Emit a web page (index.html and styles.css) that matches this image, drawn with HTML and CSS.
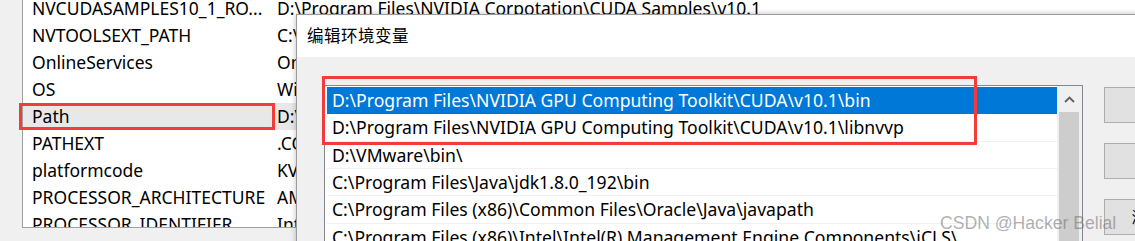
FILE: index.html
```html
<!DOCTYPE html>
<html lang="zh-CN">
<head>
<meta charset="utf-8">
<title>编辑环境变量</title>
<link rel="stylesheet" href="styles.css">
</head>
<body>
<div class="env-window">
  <div class="var-list">
    <div class="var-row"><span class="var-name">NVCUDASAMPLES10_1_RO...</span><span class="var-value">D:\Program Files\NVIDIA Corpotation\CUDA Samples\v10.1</span></div>
    <div class="var-row"><span class="var-name">NVTOOLSEXT_PATH</span><span class="var-value">C:\Program Files\NVIDIA Corporation\NvToolsExt\</span></div>
    <div class="var-row"><span class="var-name">OnlineServices</span><span class="var-value">Online Services</span></div>
    <div class="var-row"><span class="var-name">OS</span><span class="var-value">Windows_NT</span></div>
    <div class="var-row is-selected"><span class="var-name">Path</span><span class="var-value">D:\Program Files\NVIDIA GPU Computing Toolkit</span></div>
    <div class="var-row"><span class="var-name">PATHEXT</span><span class="var-value">.COM;.EXE;.BAT;.CMD;.VBS</span></div>
    <div class="var-row"><span class="var-name">platformcode</span><span class="var-value">KV</span></div>
    <div class="var-row"><span class="var-name">PROCESSOR_ARCHITECTURE</span><span class="var-value">AMD64</span></div>
    <div class="var-row"><span class="var-name">PROCESSOR_IDENTIFIER</span><span class="var-value">Intel64 Family 6</span></div>
  </div>
</div>

<div class="dialog">
  <div class="dialog-title">编辑环境变量</div>
  <div class="dialog-body">
    <div class="path-list">
      <div class="path-rows">
        <div class="path-row is-active">D:\Program Files\NVIDIA GPU Computing Toolkit\CUDA\v10.1\bin</div>
        <div class="path-row">D:\Program Files\NVIDIA GPU Computing Toolkit\CUDA\v10.1\libnvvp</div>
        <div class="path-row">D:\VMware\bin\</div>
        <div class="path-row">C:\Program Files\Java\jdk1.8.0_192\bin</div>
        <div class="path-row">C:\Program Files (x86)\Common Files\Oracle\Java\javapath</div>
        <div class="path-row">C:\Program Files (x86)\Intel\Intel(R) Management Engine Components\iCLS\</div>
      </div>
      <div class="scrollbar">
        <div class="scroll-up">
          <svg width="11" height="7" viewBox="0 0 11 7"><polyline points="1,6 5.5,1.5 10,6" fill="none" stroke="#606060" stroke-width="1.8"/></svg>
        </div>
        <div class="scroll-thumb"></div>
      </div>
    </div>
    <div class="buttons">
      <div class="btn">新建(N)</div>
      <div class="btn">编辑(E)</div>
      <div class="btn">浏览(B)...</div>
    </div>
  </div>
</div>

<div class="mark mark-path"></div>
<div class="mark mark-cuda"></div>
<div class="watermark">CSDN @Hacker Belial</div>
</body>
</html>
```

FILE: styles.css
```css
html, body {
  margin: 0;
  padding: 0;
}
body {
  width: 1135px;
  height: 241px;
  overflow: hidden;
  position: relative;
  background: #f0f0f0;
  font-family: "Noto Sans", "Noto Sans CJK SC", sans-serif;
  color: #000;
}

.env-window {
  padding-left: 22px;
}
.var-list {
  margin-top: -5px;
  height: 232px;
  overflow: hidden;
  background: #fff;
  border-left: 1px solid #a0a0a0;
  border-bottom: 1px solid #a0a0a0;
}
.var-row {
  display: flex;
  height: 27px;
  line-height: 27px;
  font-size: 17.5px;
  white-space: nowrap;
}
.var-row.is-selected {
  background: #e8e8e8;
}
.var-name {
  flex: 0 0 254px;
  box-sizing: border-box;
  padding-left: 9px;
  overflow: hidden;
}
.var-value {
  flex: 1;
}

.dialog {
  position: absolute;
  left: 296px;
  top: 14px;
  width: 900px;
  height: 260px;
  border: 1px solid #9a9a9a;
  box-shadow: 0 0 6px rgba(0, 0, 0, 0.25);
  background: #f0f0f0;
}
.dialog-title {
  height: 42px;
  line-height: 42px;
  padding-left: 10px;
  background: #fff;
  font-size: 16.5px;
  letter-spacing: 0.5px;
}
.dialog-body {
  display: flex;
  align-items: flex-start;
  padding: 28px 0 0 27px;
}
.path-list {
  flex: 0 0 auto;
  display: flex;
  width: 757px;
  height: 200px;
  border: 1px solid #828790;
  background: #fff;
}
.path-rows {
  flex: 1;
  min-width: 0;
  padding: 1px 0 0 2px;
}
.path-row {
  box-sizing: border-box;
  height: 27.33px;
  line-height: 26px;
  padding-left: 5px;
  font-size: 17.6px;
  white-space: nowrap;
  border-bottom: 1px solid #f0f0f0;
}
.path-row.is-active {
  background: #0078d7;
  color: #fff;
  border-bottom-color: #0078d7;
}
.scrollbar {
  flex: 0 0 25px;
  display: flex;
  flex-direction: column;
  background: #f0f0f0;
}
.scroll-up {
  height: 26px;
  display: flex;
  align-items: center;
  justify-content: center;
}
.scroll-thumb {
  flex: 1;
  margin: 0 3px 0 2px;
  background: #cdcdcd;
}

.buttons {
  flex: 0 0 auto;
  display: flex;
  flex-direction: column;
  gap: 20px;
  margin: 2px 0 0 21px;
}
.btn {
  width: 118px;
  height: 34px;
  line-height: 34px;
  text-align: center;
  background: #e1e1e1;
  border: 1px solid #adadad;
  font-size: 16px;
  white-space: nowrap;
}

.mark {
  position: absolute;
  border: 3px solid #f23b3c;
}
.mark-path {
  left: 19px;
  top: 103px;
  width: 250px;
  height: 21px;
}
.mark-cuda {
  left: 322px;
  top: 76px;
  width: 649px;
  height: 63px;
}

.watermark {
  position: absolute;
  left: 940px;
  top: 213px;
  line-height: 21px;
  font-family: "Liberation Sans", sans-serif;
  font-size: 17.6px;
  color: rgba(110, 110, 110, 0.55);
  white-space: nowrap;
}
```
